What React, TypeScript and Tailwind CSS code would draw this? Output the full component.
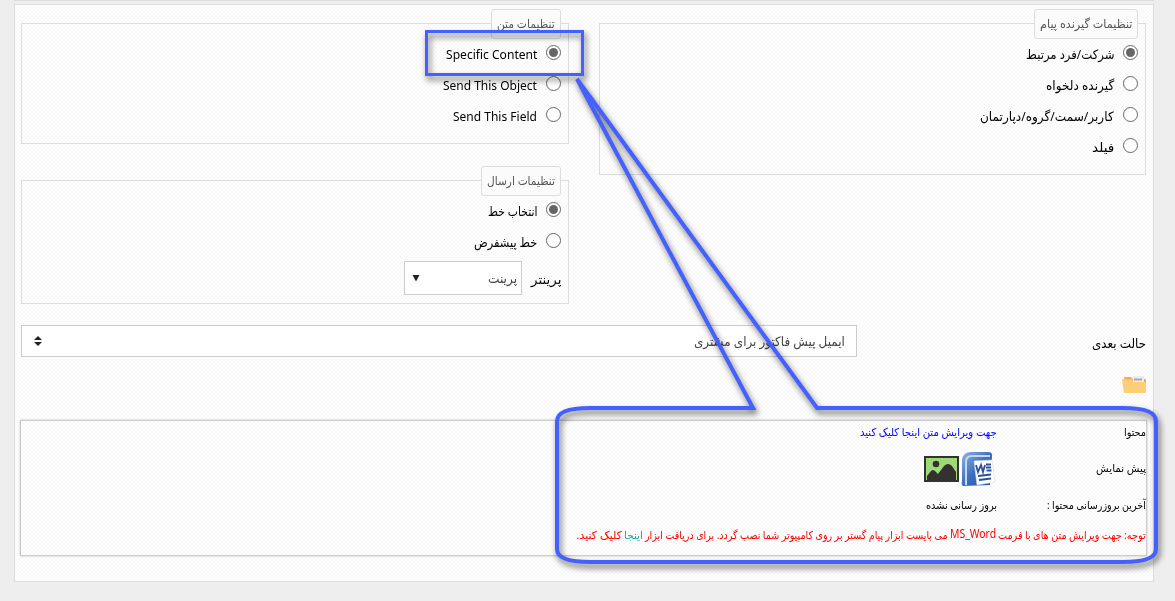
import { useLayoutEffect, useRef, useState, type ReactNode } from "react";

function Fit({ w, className = "", children }: { w: number; className?: string; children: ReactNode }) {
  const ref = useRef<HTMLSpanElement>(null);
  const [scale, setScale] = useState(1);
  useLayoutEffect(() => {
    if (ref.current) setScale(w / ref.current.offsetWidth);
  }, [w]);
  return (
    <span className={`flex shrink-0 justify-start whitespace-nowrap ${className}`} style={{ width: w }}>
      <span ref={ref} className="block shrink-0 origin-right" style={{ transform: `scaleX(${scale})` }}>
        {children}
      </span>
    </span>
  );
}

function Group({ title, w, className, children }: { title: string; w: number; className: string; children: ReactNode }) {
  return (
    <section className={`border border-[#ddd] ${className}`}>
      <h2 className="-mt-[15px] mr-[7px] flex h-[30px] w-fit items-center rounded-[3px] border border-[#ddd] bg-[#fbfbfb] px-[5px] text-[12px] text-[#555]">
        <Fit w={w}>{title}</Fit>
      </h2>
      <div className="-mt-[2px] pr-[7px]">{children}</div>
    </section>
  );
}

function Radio({ label, w, checked = false }: { label: string; w: number; checked?: boolean }) {
  return (
    <label className="flex h-[31px] items-center gap-[9px] text-[13px] text-black">
      <span className="flex size-[15px] items-center justify-center rounded-full border border-[#666] bg-white">
        {checked && <span className="size-[9px] rounded-full bg-[#666]" />}
      </span>
      <Fit w={w} className="pt-[4px]">{label}</Fit>
    </label>
  );
}

function FolderIcon() {
  return (
    <svg width="25" height="18" viewBox="0 0 25 18">
      <path d="M2 2q0-1 1-1h6l2 2h13v12H2z" fill="#f9a854" />
      <path d="M11 0h11v7H11z" fill="#ededed" />
      <path d="M12 3.500h8" stroke="#a4a8b0" strokeWidth="2" />
      <path d="M0 4q0-1 1-1h8q1 0 2 2l1 1h11q1 0 1 1v9q0 1-1 1H3q-1 0-1.200-1z" fill="#ffcf77" />
    </svg>
  );
}

function WordIcon() {
  return (
    <svg width="35" height="36" viewBox="0 0 35 36">
      <defs>
        <linearGradient id="word" x1="0" y1="0" x2="1" y2="1">
          <stop offset="0" stopColor="#8fb4e6" />
          <stop offset=".5" stopColor="#3d6fbd" />
          <stop offset="1" stopColor="#2451a0" />
        </linearGradient>
      </defs>
      <path d="M1 9Q2 1 10 1h17q5 0 4 5l-2 28-27 1Q0 34 1 30z" fill="url(#word)" />
      <path d="M5 34V11q0-6 6-6h18" fill="none" stroke="#c4d9f5" strokeWidth="2" />
      <path d="M13 10l18-1 3 22-18 3z" fill="#fff" stroke="#d6dce8" strokeWidth=".6" />
      <path d="M15 14l2 7 3-7 2 7 2-7M25 13.500h5M25 16.500h5M25.500 19.500h5M17 25l13-1.500M18 29l12-1.500" fill="none" stroke="#2b4f9c" strokeWidth="1.800" />
    </svg>
  );
}

function PictureIcon() {
  return (
    <svg width="35" height="26" viewBox="0 0 35 26">
      <path d="M0 0h35v26H0z" fill="#35312e" />
      <path d="M2 2h31v22H2z" fill="#9edb78" />
      <circle cx="12" cy="8" r="3.300" fill="#35312e" />
      <path d="M3 24v-4l4-5q2-2 4 0l3 3 6-8q4-4 8 0l4 6v8z" fill="#35312e" />
    </svg>
  );
}

export default function App() {
  return (
    <div
      dir="rtl"
      className="relative h-[601px] w-[1175px] overflow-hidden bg-[#eee] font-['Noto_Sans','DejaVu_Sans',sans-serif] leading-none text-black"
    >
      <div className="mr-[21px] h-px w-[1140px] bg-[#ddd]" />
      <main className="mt-[3px] mr-[21px] h-[578px] w-[1140px] border border-[#ddd] bg-[repeating-conic-gradient(#f9f9f9_0_25%,#fefefe_0_50%)] bg-[length:4px_4px] pr-[7px] pl-[6px] pt-[18px]">
        <div className="flex h-[302px] gap-[30px]">
          <Group title="تنظیمات گیرنده پیام" w={92} className="h-[152px] w-[547px]">
            <Radio label="شرکت/فرد مرتبط" w={88} checked />
            <Radio label="گیرنده دلخواه" w={68} />
            <Radio label="کاربر/سمت/گروه/دپارتمان" w={134} />
            <Radio label="فیلد" w={22} />
          </Group>
          <div className="flex w-[548px] flex-col gap-[36px]">
            <Group title="تنظیمات متن" w={58} className="h-[121px]">
              <Radio label="Specific Content" w={91} checked />
              <Radio label="Send This Object" w={94} />
              <Radio label="Send This Field" w={84} />
            </Group>
            <Group title="تنظیمات ارسال" w={68} className="h-[124px]">
              <Radio label="انتخاب خط" w={50} checked />
              <Radio label="خط پیشفرض" w={63} />
              <div className="mt-[5px] flex items-center gap-[9px] text-[13px]">
                <Fit w={30} className="pt-[3px]">پرینتر</Fit>
                <div className="flex h-[34px] w-[118px] items-center justify-between border border-[#ccc] bg-white pr-[4px] pl-[7px] text-[#444]">
                  <Fit w={29}>پرینت</Fit>
                  <svg width="8" height="7" viewBox="0 0 8 7"><path d="M.5 0h7L4 6.500z" fill="#222" /></svg>
                </div>
              </div>
            </Group>
          </div>
        </div>

        <div className="flex h-[32px] items-center justify-between">
          <Fit w={54} className="pt-[4px] text-[13px]">حالت بعدی</Fit>
          <div className="flex h-[32px] w-[836px] items-center justify-between border border-[#ccc] bg-white pr-[11px] pl-[12px] text-[13px] text-[#444]">
            <Fit w={151}>ایمیل پیش فاکتور برای مشتری</Fit>
            <svg width="8" height="10" viewBox="0 0 8 10"><path d="M0 4l4-4 4 4zM0 6h8l-4 4z" fill="#222" /></svg>
          </div>
        </div>

        <div className="-mr-px mt-[19px] h-[44px]"><FolderIcon /></div>

        <div className="-mr-px h-[136px] w-[1127px] border border-[#ccc] text-[11px] shadow-[0_0_2px_#bbb]">
          <div className="-mt-[2px] flex h-[24px] items-center">
            <div className="w-[149px]"><Fit w={22}>محتوا</Fit></div>
            <Fit w={137} className="text-[#00f]">جهت ویرایش متن اینجا کلیک کنید</Fit>
          </div>
          <div className="flex h-[49px] items-center">
            <div className="w-[150px]"><Fit w={50}>پیش نمایش</Fit></div>
            <div className="flex items-center gap-[2px] pt-[3px]">
              <WordIcon />
              <PictureIcon />
            </div>
          </div>
          <div className="flex h-[24px] items-center">
            <div className="w-[149px]"><Fit w={99}>آخرین بروزرسانی محتوا :</Fit></div>
            <Fit w={71}>بروز رسانی نشده</Fit>
          </div>
          <div className="flex h-[36px] items-center gap-[2px] text-[#f00]">
            <Fit w={148}>توجه: جهت ویرایش متن های با فرمت</Fit>
            <Fit w={46} className="text-[12px]">MS_Word</Fit>
            <Fit w={303}>می بایست ابزار پیام گستر بر روی کامپیوتر شما نصب گردد. برای دریافت ابزار</Fit>
            <Fit w={19} className="text-[#26a69a]">اینجا</Fit>
            <Fit w={46}>کلیک کنید.</Fit>
          </div>
        </div>
      </main>

      <svg className="absolute top-0 left-0 drop-shadow-[2px_4px_3px_rgba(0,0,0,0.6)]" width="1175" height="601" viewBox="0 0 1175 601" fill="none" stroke="#4460ff">
        <path d="M426.500 31.500h156v43h-156z" strokeWidth="3" />
        <path d="M577 79L753 408H590Q557 408 557 421V549Q557 562 590 562H1123Q1156 562 1156 549V421Q1156 408 1123 408H817Z" strokeWidth="4" />
      </svg>
    </div>
  );
}
